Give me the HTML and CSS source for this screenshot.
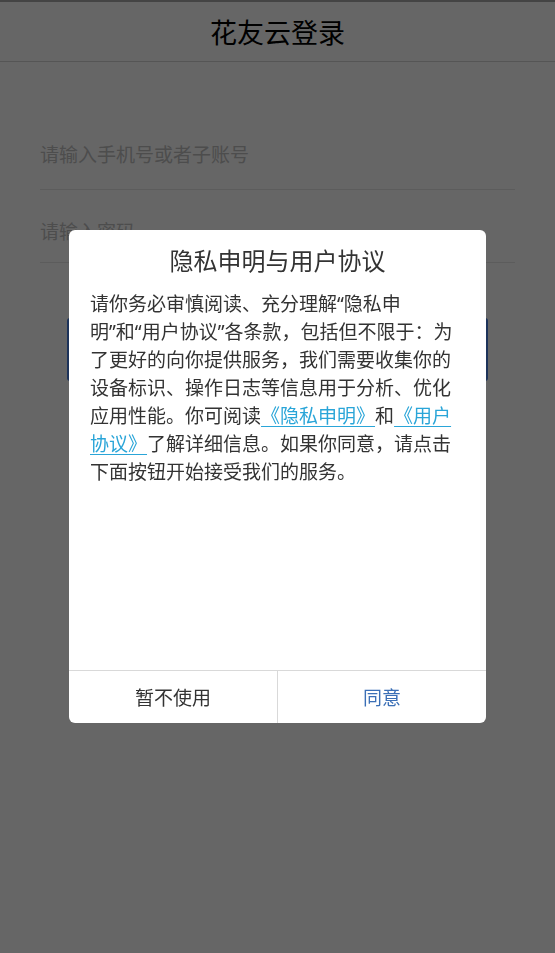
FILE: index.html
```html
<!DOCTYPE html>
<html lang="zh-CN">
<head>
<meta charset="utf-8">
<title>花友云登录</title>
<link rel="stylesheet" href="styles.css">
</head>
<body>
<div class="page">
  <header class="topbar">花友云登录</header>
  <div class="form">
    <div class="field">请输入手机号或者子账号</div>
    <div class="field second">请输入密码</div>
    <div class="login-btn">登录</div>
  </div>
</div>
<div class="overlay">
  <div class="dialog">
    <div class="dialog-title">隐私申明与用户协议</div>
    <div class="dialog-body">请你务必审慎阅读、充分理解“隐私申<br>明”和“用户协议”各条款，包括但不限于：为了更好的向你提供服务，我们需要收集你的设备标识、操作日志等信息用于分析、优化应用性能。你可阅读<a class="link">《隐私申明》</a>和<a class="link">《用户协议》</a>了解详细信息。如果你同意，请点击下面按钮开始接受我们的服务。</div>
    <div class="dialog-actions">
      <div class="action">暂不使用</div>
      <div class="action primary">同意</div>
    </div>
  </div>
</div>
</body>
</html>
```

FILE: styles.css
```css
html, body {
  margin: 0;
  padding: 0;
  height: 100%;
}
body {
  background: #ffffff;
  font-family: "Noto Sans", "Noto Sans CJK SC", sans-serif;
  color: #333;
}
.page {
  border-top: 2px solid #aaaaaa;
}
.topbar {
  height: 59px;
  border-bottom: 1px solid #d4d4d4;
  display: flex;
  align-items: center;
  justify-content: center;
  font-size: 27px;
  color: #000;
}
.form {
  padding: 54px 40px 0;
}
.field {
  font-size: 19px;
  line-height: 24px;
  color: #c0c0c0;
  padding: 27px 0 22px;
  border-bottom: 1px solid #e6e6e6;
}
.field.second {
  padding: 30px 0 18px;
}
.login-btn {
  margin: 55px 27px 0;
  height: 63px;
  background: #4a80e0;
  color: #fff;
  font-size: 20px;
  display: flex;
  align-items: center;
  justify-content: center;
  border-radius: 3px;
}
.overlay {
  position: fixed;
  inset: 0;
  background: rgba(0, 0, 0, 0.6);
  display: flex;
  align-items: center;
  justify-content: center;
}
.dialog {
  width: 417px;
  height: 493px;
  background: #fff;
  border-radius: 6px;
  display: flex;
  flex-direction: column;
  overflow: hidden;
}
.dialog-title {
  font-size: 24px;
  line-height: 32px;
  padding-top: 15px;
  text-align: center;
  color: #333;
}
.dialog-body {
  flex: 1;
  padding: 13px 21px 0;
  font-size: 19px;
  line-height: 28px;
  color: #333;
}
.link {
  color: #2aa5d8;
  text-decoration: underline;
  text-underline-offset: 3px;
}
.dialog-actions {
  display: flex;
  height: 52px;
  border-top: 1px solid #d9d9d9;
}
.action {
  flex: 1;
  display: flex;
  align-items: center;
  justify-content: center;
  font-size: 19px;
  color: #333;
}
.action + .action {
  border-left: 1px solid #d9d9d9;
}
.action.primary {
  color: #3b6fb6;
}
```
